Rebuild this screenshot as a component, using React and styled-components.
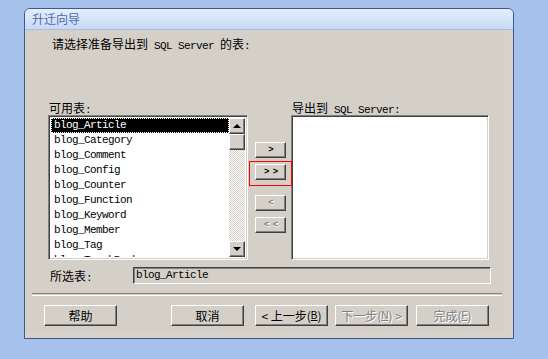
import React from 'react'
import styled, { createGlobalStyle, css } from 'styled-components'

const Global = createGlobalStyle`
  html, body {
    margin: 0;
    padding: 0;
    background: #a6c1ec;
  }
  body {
    font-family: "Noto Sans CJK SC", "Liberation Sans", sans-serif;
    font-size: 12px;
    color: #000;
  }
`

const Page = styled.div`
  width: 548px;
  height: 359px;
  padding: 8px 0 0 24px;
  box-sizing: border-box;
`

const Window = styled.div`
  width: 490px;
  height: 331px;
  box-sizing: border-box;
  border: 1px solid #3a5a8c;
  border-radius: 6px 6px 0 0;
  background: #d4d0c8;
  overflow: hidden;
  display: flex;
  flex-direction: column;
`

const TitleBar = styled.div`
  height: 20px;
  flex: none;
  border-bottom: 1px solid #a9bde0;
  background: linear-gradient(#e4eefd, #d3e1f9 60%, #c8d9f6);
  color: #4a6cab;
  font-size: 12px;
  line-height: 20px;
  padding-left: 7px;
`

const Body = styled.div`
  flex: 1;
  display: flex;
  flex-direction: column;
  padding-top: 7px;
  border-right: 9px solid #d7d2ca;
  border-bottom: 6px solid #d7d2ca;
`

const Latin = styled.span`
  font-family: "Liberation Mono", monospace;
  font-size: 11px;
  letter-spacing: -0.6px;
`

const Heading = styled.div`
  margin-left: 27px;
  line-height: 14px;
  height: 14px;
  white-space: pre;
`

const Panes = styled.div`
  display: flex;
  margin-top: 50px;
  padding-left: 23px;
`

const Column = styled.div`
  display: flex;
  flex-direction: column;
  width: ${(p) => p.$w}px;
  margin-left: ${(p) => p.$ml || 0}px;
  position: relative;
`

const Label = styled.div`
  line-height: 14px;
  height: 14px;
  padding-left: 1px;
  white-space: pre;
`

const sunken = css`
  box-sizing: border-box;
  border: 1px solid;
  border-color: #808080 #fff #fff #808080;
  box-shadow: inset 1px 1px 0 #404040, inset -1px -1px 0 #d4d0c8;
`

const raised = css`
  box-sizing: border-box;
  background: #d4d0c8;
  border: 1px solid;
  border-color: #fff #404040 #404040 #fff;
  box-shadow: inset -1px -1px 0 #808080;
`

const ListBox = styled.div`
  ${sunken};
  height: 145px;
  background: #fff;
  padding: 2px;
  display: flex;
  overflow: hidden;
`

const Items = styled.div`
  flex: 1;
  overflow: hidden;
`

const Item = styled.div`
  height: 15px;
  line-height: 15px;
  padding-left: 3px;
  white-space: pre;
  font-family: "Liberation Mono", monospace;
  font-size: 11px;
  letter-spacing: -0.6px;
  ${(p) =>
    p.$selected &&
    css`
      background: #000;
      color: #fff;
      outline: 1px dotted #fff;
      outline-offset: -1px;
    `}
`

const ScrollBar = styled.div`
  width: 16px;
  display: flex;
  flex-direction: column;
  background: repeating-conic-gradient(#d4d0c8 0 25%, #fff 0 50%) 0 0 / 2px 2px;
`

const ScrollBtn = styled.div`
  ${raised};
  width: 16px;
  height: 16px;
  flex: none;
  display: flex;
  align-items: center;
  justify-content: center;
  margin-top: ${(p) => (p.$bottom ? 'auto' : '0')};
`

const Arrow = styled.div`
  width: 0;
  height: 0;
  border-left: 4px solid transparent;
  border-right: 4px solid transparent;
  ${(p) =>
    p.$down
      ? css`border-top: 4px solid #000;`
      : css`border-bottom: 4px solid #000;`}
`

const MoveButton = styled.div`
  ${raised};
  width: 31px;
  height: 16px;
  margin-top: ${(p) => p.$mt}px;
  font-family: "Liberation Mono", monospace;
  font-size: 9px;
  font-weight: bold;
  line-height: 14px;
  text-align: center;
  white-space: pre;
  letter-spacing: -1px;
  color: ${(p) => (p.$disabled ? '#808080' : '#000')};
  text-shadow: ${(p) => (p.$disabled ? '1px 1px 0 #fff' : 'none')};
`

const FocusMark = styled.div`
  position: absolute;
  z-index: 2;
  left: -6px;
  top: 60px;
  width: 43px;
  height: 25px;
  box-sizing: border-box;
  border: 1px solid #ff0000;
  pointer-events: none;
`

const SelectedRow = styled.div`
  display: flex;
  align-items: center;
  margin-top: 7px;
  padding-left: 24px;
`

const RowLabel = styled.div`
  width: 84px;
  padding-left: 1px;
  box-sizing: border-box;
`

const Field = styled.div`
  box-sizing: border-box;
  width: 358px;
  height: 17px;
  border: 1px solid;
  border-color: #404040 #fff #fff #404040;
  box-shadow: inset 1px 1px 0 #808080;
  padding-left: 2px;
  line-height: 14px;
  overflow: hidden;
  font-family: "Liberation Mono", monospace;
  font-size: 11px;
  letter-spacing: -0.6px;
`

const Separator = styled.div`
  margin: 9px 0 0 7px;
  width: 470px;
  height: 1px;
  border-top: 1px solid #808080;
  border-bottom: 1px solid #fff;
`

const ButtonRow = styled.div`
  display: flex;
  margin-top: 9px;
  padding-left: 19px;
`

const Button = styled.div`
  ${raised};
  width: 73px;
  height: 21px;
  margin-left: ${(p) => p.$ml || 0}px;
  display: flex;
  align-items: center;
  justify-content: center;
  white-space: pre;
  line-height: 19px;
  color: ${(p) => (p.$disabled ? '#808080' : '#000')};
  text-shadow: ${(p) => (p.$disabled ? '1px 1px 0 #fff' : 'none')};
`

const Key = styled.span`
  font-family: "Liberation Sans", sans-serif;
  font-size: 10px;
  text-decoration: underline;
`

const tables = [
  'blog_Article',
  'blog_Category',
  'blog_Comment',
  'blog_Config',
  'blog_Counter',
  'blog_Function',
  'blog_Keyword',
  'blog_Member',
  'blog_Tag',
  'blog_TrackBack',
]

export default function App() {
  return (
    <Page>
      <Global />
      <Window>
        <TitleBar>升迁向导</TitleBar>
        <Body>
          <Heading>
            请选择准备导出到<Latin> SQL Server </Latin>的表<Latin>:</Latin>
          </Heading>

          <Panes>
            <Column $w={200}>
              <Label>
                可用表<Latin>:</Latin>
              </Label>
              <ListBox>
                <Items>
                  {tables.map((t, i) => (
                    <Item key={t} $selected={i === 0}>
                      {t}
                    </Item>
                  ))}
                </Items>
                <ScrollBar>
                  <ScrollBtn>
                    <Arrow />
                  </ScrollBtn>
                  <ScrollBtn />
                  <ScrollBtn $bottom>
                    <Arrow $down />
                  </ScrollBtn>
                </ScrollBar>
              </ListBox>
            </Column>

            <Column $w={31} $ml={7}>
              <MoveButton $mt={41}>{'>'}</MoveButton>
              <MoveButton $mt={6}>{'> >'}</MoveButton>
              <MoveButton $mt={15} $disabled>
                {'<'}
              </MoveButton>
              <MoveButton $mt={6} $disabled>
                {'< <'}
              </MoveButton>
              <FocusMark />
            </Column>

            <Column $w={198} $ml={5}>
              <Label>
                导出到<Latin> SQL Server:</Latin>
              </Label>
              <ListBox />
            </Column>
          </Panes>

          <SelectedRow>
            <RowLabel>
              所选表<Latin>:</Latin>
            </RowLabel>
            <Field>blog_Article</Field>
          </SelectedRow>

          <Separator />

          <ButtonRow>
            <Button>帮助</Button>
            <Button $ml={54}>取消</Button>
            <Button $ml={11}>
              {'< 上一步('}
              <Key>B</Key>)
            </Button>
            <Button $ml={7} $disabled>
              {'下一步('}
              <Key>N</Key>
              {') >'}
            </Button>
            <Button $ml={8} $disabled>
              完成(<Key>F</Key>)
            </Button>
          </ButtonRow>
        </Body>
      </Window>
    </Page>
  )
}
